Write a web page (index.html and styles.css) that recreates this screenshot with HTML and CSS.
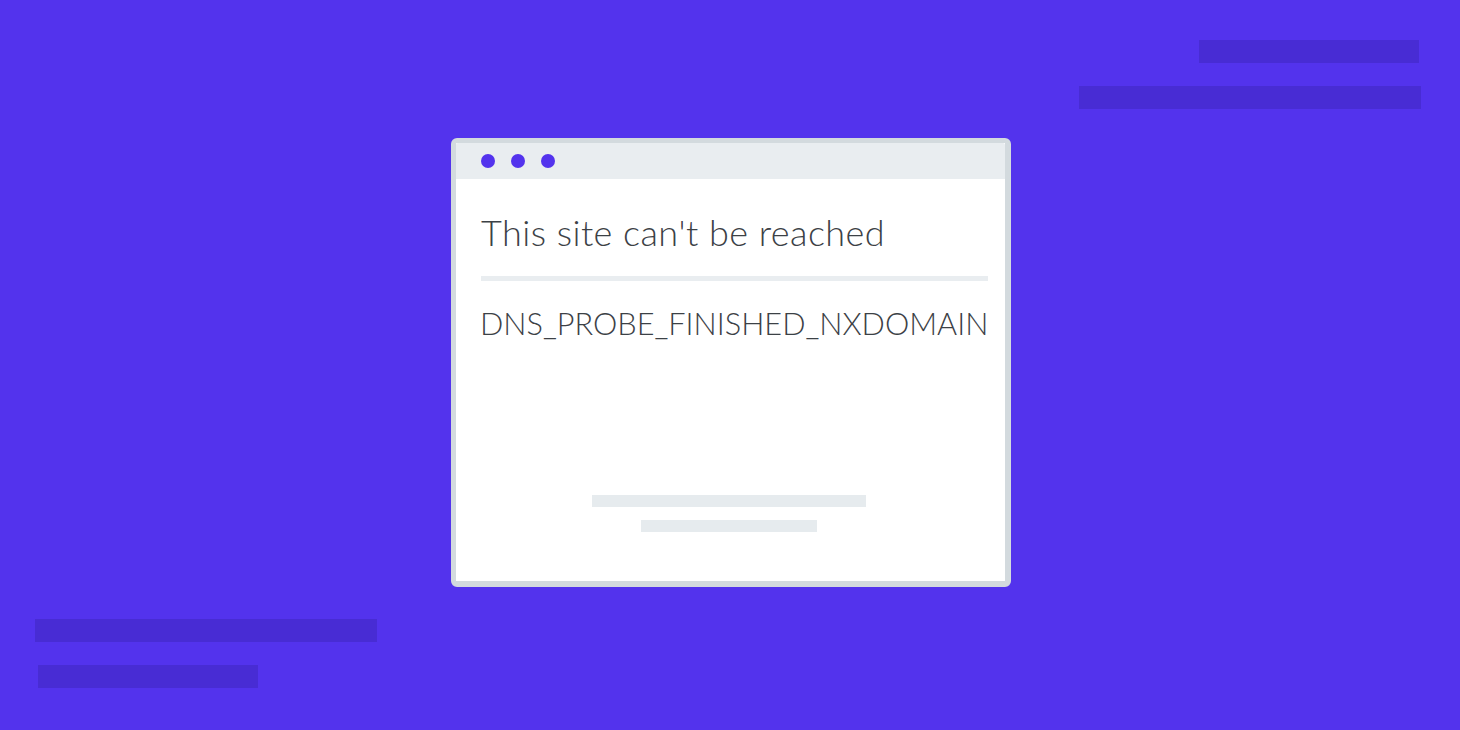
FILE: index.html
```html
<!DOCTYPE html>
<html lang="en">
<head>
    <meta charset="UTF-8" />
    <title>This site can't be reached</title>
<link rel="stylesheet" href="styles.css">
</head>
<body>
    <div class="page">
        <div class="deco deco-top">
            <div class="deco-bar short"></div>
            <div class="deco-bar long"></div>
        </div>
        <div class="window">
            <div class="titlebar">
                <span class="dot"></span>
                <span class="dot"></span>
                <span class="dot"></span>
            </div>
            <div class="content">
                <h1 class="heading">This site can't be reached</h1>
                <div class="rule"></div>
                <p class="code">DNS_PROBE_FINISHED_NXDOMAIN</p>
                <div class="placeholder">
                    <div class="ph-line wide"></div>
                    <div class="ph-line narrow"></div>
                </div>
            </div>
        </div>
        <div class="deco deco-bottom">
            <div class="deco-bar long"></div>
            <div class="deco-bar short"></div>
        </div>
    </div>
</body>
</html>
```

FILE: styles.css
```css
* {margin: 0; padding: 0; box-sizing: border-box;}
html, body {height: 100%;}
body {
    background-color: #5333ED;
    font-family: Lato, "Open Sans", sans-serif;
    overflow: hidden;
}
.page {
    width: 1460px;
    height: 730px;
    display: flex;
    flex-direction: column;
}
/* decorative bars */
.deco {
    display: flex;
    flex-direction: column;
    gap: 23px;
}
.deco-bar {
    height: 23px;
    background-color: #482CD4;
}
.deco-bar.long {width: 342px;}
.deco-bar.short {width: 220px;}
.deco-top {
    padding-top: 40px;
    padding-right: 39px;
    align-items: flex-end;
}
.deco-top .short {margin-right: 2px;}
.deco-bottom {
    margin-top: 32px;
    padding-left: 35px;
    align-items: flex-start;
}
.deco-bottom .short {margin-left: 3px;}
/* browser window */
.window {
    width: 560px;
    height: 449px;
    margin-top: 29px;
    margin-left: 451px;
    border: 5px solid #D3DADE;
    border-right-width: 6px;
    border-bottom-width: 6px;
    border-radius: 6px;
    background-color: #FFFFFF;
    display: flex;
    flex-direction: column;
}
.titlebar {
    height: 36px;
    background-color: #E9EDF0;
    display: flex;
    align-items: center;
    gap: 16px;
    padding-left: 25px;
    border-radius: 2px 2px 0 0;
}
.dot {
    width: 14px;
    height: 14px;
    border-radius: 50%;
    background-color: #5333ED;
}
.content {
    flex: 1;
    display: flex;
    flex-direction: column;
    padding: 0 17px 0 25px;
}
.heading {
    font-size: 36px;
    font-weight: 300;
    color: #3C4146;
    line-height: 42px;
    margin-top: 32px;
    letter-spacing: 0.45px;
}
.rule {
    height: 5px;
    background-color: #E9EDF0;
    margin-top: 23px;
}
.code {
    font-size: 30.7px;
    font-weight: 300;
    color: #3C4146;
    line-height: 38px;
    margin-top: 24px;
    margin-left: -1px;
}
.placeholder {
    display: flex;
    flex-direction: column;
    align-items: center;
    gap: 13px;
    margin-top: 152px;
    margin-right: 12px;
}
.ph-line {
    height: 12px;
    background-color: #E6EBEE;
}
.ph-line.wide {width: 274px;}
.ph-line.narrow {width: 176px;}
```
